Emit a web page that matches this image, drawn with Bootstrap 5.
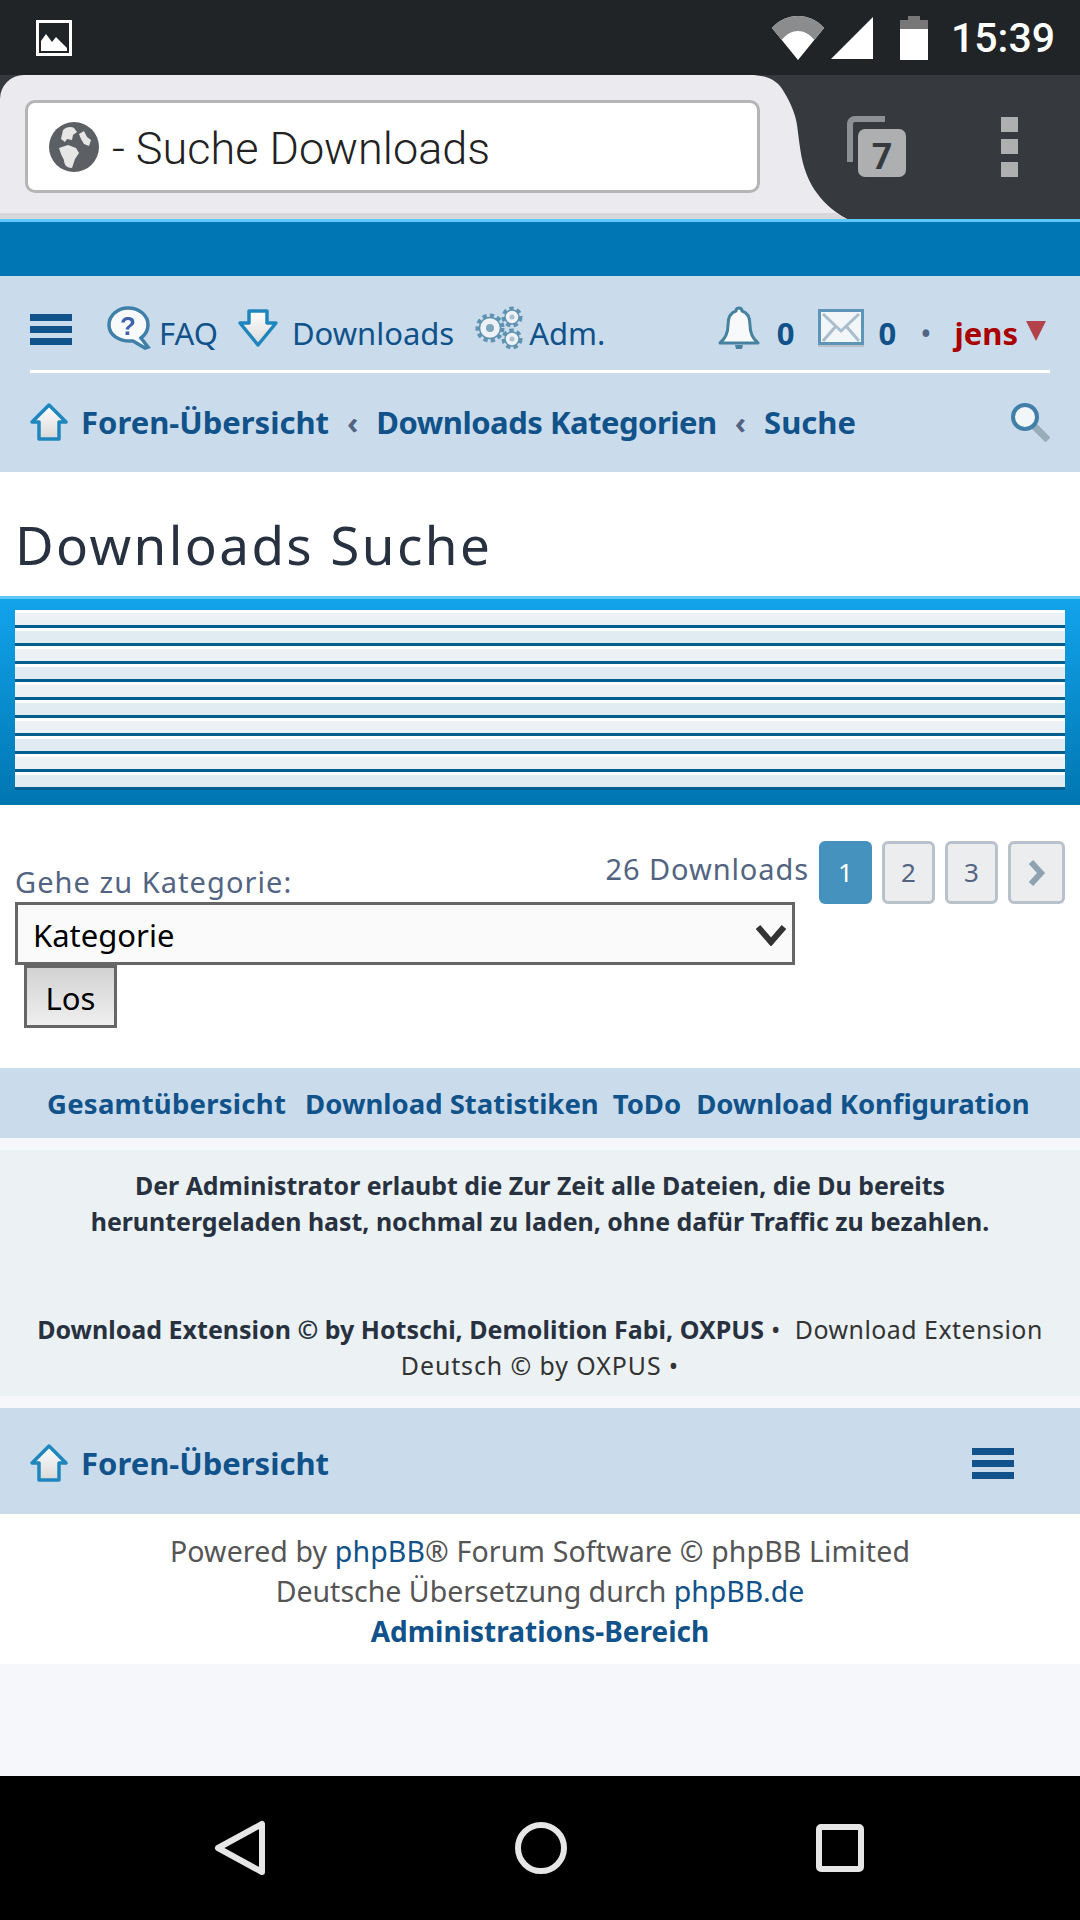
<!DOCTYPE html>
<html lang="de">
<head>
<meta charset="UTF-8">
<title>Downloads Suche</title>
<link href="https://cdn.jsdelivr.net/npm/bootstrap@5.3.3/dist/css/bootstrap.min.css" rel="stylesheet">
<style>
html,body{margin:0;background:#f5f7fa}
.phone{width:1080px;height:1920px;overflow:hidden;font-family:"Noto Sans","Open Sans",sans-serif;color:#28313f;display:flex;flex-direction:column}
a{text-decoration:none;color:#105289}
svg{display:block;flex:none}
.softicon{filter:blur(.6px)}
.statusbar{height:75px;background:#202427;padding:0 25px 0 36px}
.wifigap{margin-left:7px}
.batterygap{margin-left:25px}
.clock{font:500 41px Roboto,sans-serif;color:#fff;margin-left:23px}
.toolbar{height:144px;background:#363a3e}
.tabface{width:750px;height:144px;background:#ebebef;border-top-left-radius:24px;border-bottom:6px solid #d8d8dc;padding:25px 0 0 25px}
.urlbox{position:relative;z-index:1;width:735px;height:93px;background:#fff;border:3px solid #b5b5b5;border-radius:10px;padding-left:21px;gap:13px;font:300 45px Roboto,sans-serif;color:#222}
.urltext{padding-top:3px}
.tabtools{gap:95px;margin-left:-2px}
.topstrip{height:57px;background:#0076b5;border-top:3px solid #5fc8fb}
.navpanel{height:196px;background:#cadceb;padding:0 30px}
.navrow1{height:97px;border-bottom:3px solid #fff;font-size:31px;padding-top:10px}
.navrow1 a,.navrow1 .dotsep{margin-top:10px}
.burgerdrop{margin-top:2px}
.navrow2{height:96px;font-size:31px;font-weight:700;padding-top:2px}
.crumbsep{color:#536482;font-weight:700;margin:0 18px}
.tightcrumb{letter-spacing:-.5px}
.count0{font-weight:700}
.dotsep{color:#536482;margin:0 23px 0 24px;font-size:30px}
.username{color:#a00;font-weight:700}
.arrowdown{width:0;height:0;border-left:10px solid transparent;border-right:10px solid transparent;border-top:20px solid #b2434a;margin:6px 0 0 8px}
.navendgap{width:4px}
.pagetitle{height:124px;margin:0;padding:41px 0 0 15px;font-size:53px;letter-spacing:2.4px;font-weight:400;line-height:64px;color:#28313f;background:#fff}
.bluepanel{height:209px;border-top:3px solid #5fc8fb;background:linear-gradient(#12a3eb,#0076b1);padding:11px 15px 0}
.striperow{height:18px;border-top:3px solid #fff;border-bottom:3px solid #005f8f;background:#ebf1f5}
.striperow:nth-child(even){background:#e1ebf2}
.formarea{height:263px;background:#fff;padding:36px 15px 0 15px;display:grid;grid-template-columns:1fr;align-items:start}
.formleft,.pagerbox{grid-area:1/1}
.catlabel{color:#536482;font-size:29px;letter-spacing:1.05px;line-height:34px;padding-top:24px;height:61px}
.catselect{width:780px;height:63px;border:3px solid #666;background:#fafafa;padding:3px 5px 0 15px;font-size:31px;color:#000}
.gobtn{display:block;width:93px;height:63px;margin-left:9px;border:3px solid #666;background:linear-gradient(#d2d2d2,#efefef);font-size:31px;color:#000;padding:3px 0 0;border-radius:0}
.pagerbox{justify-self:end;gap:10px;font-size:29px;letter-spacing:.9px;color:#536482;white-space:nowrap}
.pagecount{line-height:56px}
.pagebtn{width:53px;height:63px;border:3px solid #b9c2ca;border-radius:6px;background:#ecedee;color:#536482;font-size:26px;letter-spacing:0}
.pagebtn.cur{background:#4692bf;border-color:#4692bf;color:#fff}
.pagebtn.nxt{width:57px}
.linkbar{height:70px;background:#cadceb;margin-bottom:12px;font-size:27.5px;font-weight:700;padding:2px 0 0 47px}
.linkwide{letter-spacing:.25px}
.linknarrow{letter-spacing:-.1px}
.infopanel{height:246px;background:#ecf1f3;text-align:center;font-size:24.9px;line-height:36px;padding:17px 30px 0}
.infopanel p{margin:0}
.creditline{margin-top:72px!important;color:#333;letter-spacing:.5px}
.creditline b{color:#28313f;letter-spacing:0;font-size:25px}
.creditwide{letter-spacing:.93px}
.footnav{height:106px;margin-top:12px;background:#cadceb;padding:4px 66px 0 30px;font-size:31px;font-weight:700}
.footnote{height:150px;background:#fff;text-align:center;font-size:28.5px;line-height:40px;color:#555;padding-top:17px}
.footwide{letter-spacing:.12px}
.footnote b{font-size:28px}
.pagefill{height:112px;background:#f5f7fa}
.softkeys{height:144px;background:#000;padding:0 216px 0 214px}
</style>
</head>
<body>
<div class="phone">

  <div class="statusbar d-flex align-items-center">
    <svg width="36" height="36" viewBox="0 0 36 36"><rect x="1.5" y="1.5" width="33" height="33" fill="none" stroke="#fff" stroke-width="3"/><path d="M5 31V21l5-7 6 8 4-5 11 11v3z" fill="#fff"/></svg>
    <span class="flex-grow-1"></span>
    <svg width="52" height="44" viewBox="0 0 54 44" preserveAspectRatio="none"><path d="M0 12C14-4 40-4 54 12L27 44z" fill="#fff"/><path d="M0 12C14-4 40-4 54 12L44 24C34 12 20 12 10 24z" fill="#8a8c8e"/></svg>
    <svg class="wifigap" width="44" height="42" viewBox="0 0 44 42"><path d="M42 0v42H0z" fill="#fff"/></svg>
    <svg class="batterygap" width="28" height="44" viewBox="0 0 28 44"><path d="M8 0h12v4h8v13H0V4h8z" fill="#777"/><path d="M0 13h28v31H0z" fill="#fff"/></svg>
    <span class="clock">15:39</span>
  </div>

  <div class="toolbar d-flex">
    <div class="tabface">
      <div class="urlbox d-flex align-items-center">
        <svg width="50" height="50" viewBox="0 0 50 50"><circle cx="25" cy="25" r="25" fill="#5c6064"/><path d="M14 8c3-3 8-4 11-2l3 4-4 3-1 5-5-1-2 3-4-3zM30 12l5-3 3 6 4 3-2 6-5-2-3-5zM10 26l9-3 8 3 3 5-4 6-3 9c-5 0-8-3-8-8l-3-6z" fill="#e6e6e6"/></svg>
        <span class="urltext">- Suche Downloads</span>
      </div>
    </div>
    <svg width="98" height="144" viewBox="0 0 98 144"><path d="M0 0C18 0 28 6 34 17C42 30 46 42 47 50C49 65 50 74 52 84C56 102 66 127 97 144H0z" fill="#ebebef"/><path d="M0 138h85l12 6H0z" fill="#d8d8dc"/></svg>
    <div class="tabtools d-flex align-items-center">
      <svg width="60" height="62" viewBox="0 0 60 62"><path d="M4 46V8c0-3 2-5 5-5h30" fill="none" stroke="#8e9194" stroke-width="6"/><rect x="12" y="13" width="48" height="48" rx="7" fill="#adafb1"/><text x="36" y="53" text-anchor="middle" font-family="Roboto,sans-serif" font-weight="700" font-size="36" fill="#363a3e">7</text></svg>
      <svg width="17" height="60" viewBox="0 0 17 60"><path d="M0 0h17v15H0zM0 22h17v15H0zM0 45h17v15H0z" fill="#adafb1"/></svg>
    </div>
  </div>

  <div class="topstrip"></div>

  <div class="navpanel">
    <div class="navrow1 d-flex align-items-center">
      <svg class="burgerdrop" width="42" height="31" viewBox="0 0 42 31"><path d="M0 0h42v7H0zM0 12h42v7H0zM0 24h42v7H0z" fill="#105289"/></svg>
      <svg class="softicon" style="margin-left:35px" width="44" height="44" viewBox="0 0 44 44"><path d="M21 2c11 0 20 7 20 17 0 6-3 10-7 13l7 9-3 1-12-7C12 36 2 29 2 19 2 9 11 2 21 2z" fill="#f7f9fb" stroke="#3f7fa8" stroke-width="3.5"/><text x="21" y="29" text-anchor="middle" font-family="Liberation Sans,sans-serif" font-weight="700" font-size="26" fill="#3f62ae">?</text></svg>
      <a class="ms-2" href="#">FAQ</a>
      <svg class="softicon" style="margin-left:20px" width="40" height="38" viewBox="0 0 40 38"><defs><linearGradient id="arrowfill" x1="0" y1="0" x2="0" y2="1"><stop offset="0" stop-color="#fff"/><stop offset="1" stop-color="#d9d9d9"/></linearGradient></defs><path d="M11 2h18v12h9L20 36 2 14h9z" fill="url(#arrowfill)" stroke="#1f86bd" stroke-width="3.5" stroke-linejoin="round"/></svg>
      <a style="margin-left:14px" href="#">Downloads</a>
      <svg class="softicon" style="margin-left:21px" width="48" height="44" viewBox="0 0 48 44"><g fill="none" stroke="#5f92b0" stroke-width="5" stroke-dasharray="4 3"><circle cx="15" cy="22" r="12"/><circle cx="37" cy="11" r="8"/><circle cx="37" cy="33" r="8"/></g><g fill="#edf2f6" stroke="#5f92b0" stroke-width="1.5"><circle cx="15" cy="22" r="10.5"/><circle cx="37" cy="11" r="7"/><circle cx="37" cy="33" r="7"/></g><circle cx="15" cy="22" r="4" fill="#7fa4bd"/><circle cx="37" cy="11" r="2.5" fill="#a9c0d0"/><circle cx="37" cy="33" r="2.5" fill="#a9c0d0"/></svg>
      <a style="margin-left:6px" href="#">Adm.</a>
      <span class="flex-grow-1"></span>
      <svg class="softicon" width="42" height="44" viewBox="0 0 42 44"><path d="M21 2c2 0 3 1 3 3 7 2 8 8 8 14 0 8 2 13 8 18H2c6-5 8-10 8-18 0-6 1-12 8-14 0-2 1-3 3-3z" fill="#f7f9fb" stroke="#46829f" stroke-width="3" stroke-linejoin="round"/><path d="M17 39h8l-1 4h-6z" fill="#46829f"/></svg>
      <a class="count0" style="margin-left:17px" href="#">0</a>
      <svg class="softicon" style="margin-left:23px" width="46" height="38" viewBox="0 0 46 38"><rect x="1.5" y="1.5" width="43" height="33" fill="#f3f6f8" stroke="#5c95b8" stroke-width="3"/><path d="M5 5l18 17L41 5M5 32l13-15M41 32L28 17" fill="none" stroke="#a9bdcc" stroke-width="3"/><path d="M0 36h46v2H0z" fill="#b8c2c8"/></svg>
      <a class="count0" style="margin-left:15px" href="#">0</a>
      <span class="dotsep">•</span>
      <a class="username" href="#">jens</a>
      <span class="arrowdown"></span>
      <span class="navendgap"></span>
    </div>
    <div class="navrow2 d-flex align-items-center">
      <svg class="softicon" width="38" height="38" viewBox="0 0 38 38"><path d="M19 2l17 17h-7v17H9V19H2z" fill="url(#arrowfill)" stroke="#1f86bd" stroke-width="3.5" stroke-linejoin="round"/></svg>
      <a style="margin-left:13px" href="#">Foren-Übersicht</a>
      <span class="crumbsep">‹</span>
      <a class="tightcrumb" href="#">Downloads Kategorien</a>
      <span class="crumbsep">‹</span>
      <a href="#">Suche</a>
      <span class="flex-grow-1"></span>
      <svg class="softicon" width="40" height="40" viewBox="0 0 40 40"><path d="M24 24l14 14" stroke="#97aeb8" stroke-width="7"/><circle cx="15" cy="15" r="12" fill="#f3f6f8" stroke="#3f7fa8" stroke-width="4"/></svg>
    </div>
  </div>

  <h2 class="pagetitle">Downloads Suche</h2>

  <div class="bluepanel">
    <div class="striperow"></div><div class="striperow"></div><div class="striperow"></div><div class="striperow"></div><div class="striperow"></div>
    <div class="striperow"></div><div class="striperow"></div><div class="striperow"></div><div class="striperow"></div><div class="striperow"></div>
  </div>

  <div class="formarea">
    <div class="formleft">
      <div class="catlabel">Gehe zu Kategorie:</div>
      <div class="catselect d-flex align-items-center justify-content-between">
        <span>Kategorie</span>
        <svg width="32" height="22" viewBox="0 0 32 22"><path d="M3 3l13 15L29 3" fill="none" stroke="#333" stroke-width="6"/></svg>
      </div>
      <button class="gobtn" type="button">Los</button>
    </div>
    <div class="pagerbox d-flex align-items-start">
      <span class="pagecount">26 Downloads</span>
      <span class="pagebtn cur d-flex align-items-center justify-content-center">1</span>
      <span class="pagebtn d-flex align-items-center justify-content-center">2</span>
      <span class="pagebtn d-flex align-items-center justify-content-center">3</span>
      <span class="pagebtn nxt d-flex align-items-center justify-content-center"><svg width="18" height="28" viewBox="0 0 18 28"><path d="M3 3l10 11L3 25" fill="none" stroke="#8fa2b2" stroke-width="6"/></svg></span>
    </div>
  </div>

  <div class="linkbar d-flex align-items-center">
    <a class="linkwide" href="#">Gesamtübersicht</a>
    <a style="margin-left:19px" href="#">Download Statistiken</a>
    <a style="margin-left:14px" href="#">ToDo</a>
    <a class="linknarrow" style="margin-left:15px" href="#">Download Konfiguration</a>
  </div>

  <div class="infopanel">
    <p><b>Der Administrator erlaubt die Zur Zeit alle Dateien, die Du bereits<br>heruntergeladen hast, nochmal zu laden, ohne dafür Traffic zu bezahlen.</b></p>
    <p class="creditline"><b>Download Extension © by Hotschi, Demolition Fabi, OXPUS</b> •&nbsp; Download Extension<br><span class="creditwide">Deutsch © by OXPUS •</span></p>
  </div>

  <div class="footnav d-flex align-items-center">
    <svg class="softicon" width="38" height="38" viewBox="0 0 38 38"><path d="M19 2l17 17h-7v17H9V19H2z" fill="url(#arrowfill)" stroke="#1f86bd" stroke-width="3.5" stroke-linejoin="round"/></svg>
    <a style="margin-left:13px" href="#">Foren-Übersicht</a>
    <span class="flex-grow-1"></span>
    <svg width="42" height="31" viewBox="0 0 42 31"><path d="M0 0h42v7H0zM0 12h42v7H0zM0 24h42v7H0z" fill="#105289"/></svg>
  </div>

  <div class="footnote">
    <span class="footwide">Powered by <a href="#">phpBB</a>® Forum Software © phpBB Limited</span><br>
    Deutsche Übersetzung durch <a href="#">phpBB.de</a><br>
    <a href="#"><b>Administrations-Bereich</b></a>
  </div>

  <div class="pagefill"></div>

  <div class="softkeys d-flex align-items-center justify-content-between">
    <svg width="52" height="56" viewBox="0 0 52 56"><path d="M48 4v48L4 28z" fill="none" stroke="#e6e6e6" stroke-width="6" stroke-linejoin="round"/></svg>
    <svg width="52" height="52" viewBox="0 0 52 52"><circle cx="26" cy="26" r="23" fill="none" stroke="#e6e6e6" stroke-width="6"/></svg>
    <svg width="48" height="48" viewBox="0 0 48 48"><rect x="3" y="3" width="42" height="42" rx="2" fill="none" stroke="#e6e6e6" stroke-width="6"/></svg>
  </div>
</div>
<script src="https://cdn.jsdelivr.net/npm/bootstrap@5.3.3/dist/js/bootstrap.bundle.min.js"></script>
</body>
</html>
